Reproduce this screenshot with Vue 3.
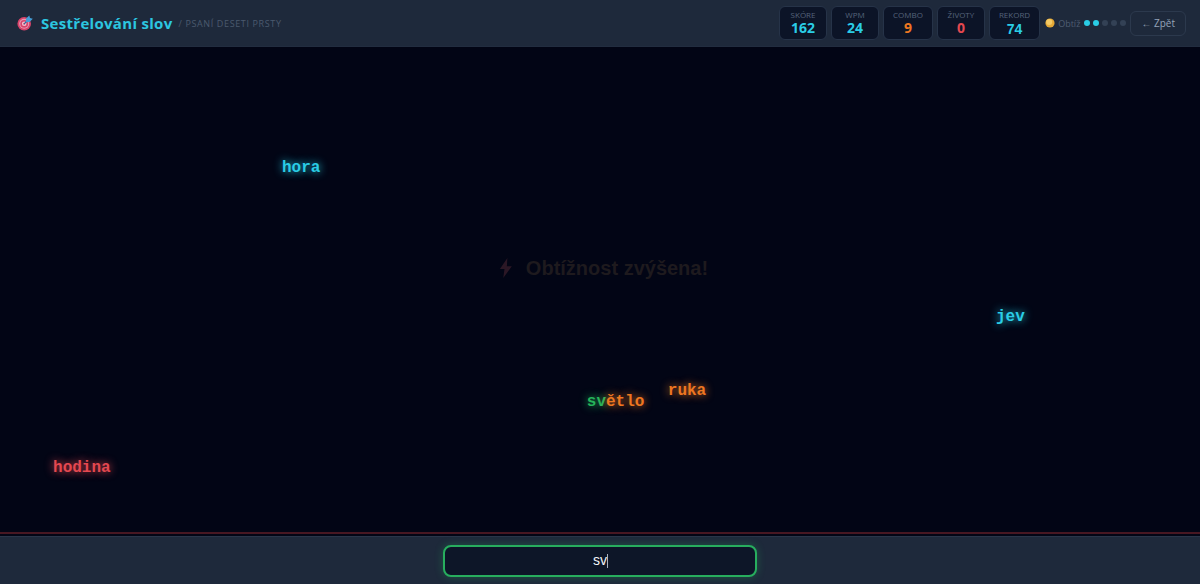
<script setup>
import { ref } from 'vue'

const typed = ref('sv')
const level = 2
const stats = [
  { label: 'Skóre', value: 162, tone: 'cyan' },
  { label: 'WPM', value: 24, tone: 'cyan' },
  { label: 'Combo', value: 9, tone: 'orange' },
  { label: 'Životy', value: 0, tone: 'red' },
  { label: 'Rekord', value: 74, tone: 'cyan', plain: true }
]
const words = [
  { done: '', rest: 'hora', x: 23.5, y: 24.8, tone: 'cyan' },
  { done: '', rest: 'jev', x: 83, y: 55.4, tone: 'cyan' },
  { done: '', rest: 'ruka', x: 55.65, y: 70.6, tone: 'orange' },
  { done: 'sv', rest: 'ětlo', x: 48.9, y: 72.8, tone: 'orange' },
  { done: '', rest: 'hodina', x: 4.42, y: 86.4, tone: 'red' }
]
</script>

<template>
  <div class="game">
    <header class="bar">
      <svg class="target" viewBox="0 0 16 16" aria-hidden="true">
        <circle cx="7.2" cy="8.8" r="6.8" fill="#d9436b" />
        <circle cx="7.2" cy="8.8" r="5" fill="#e59ab2" />
        <circle cx="7.2" cy="8.8" r="3.9" fill="#d9436b" />
        <circle cx="7.2" cy="8.8" r="2.3" fill="#efc3d2" />
        <circle cx="7.2" cy="8.8" r="1" fill="#d9436b" />
        <path d="M7.2 8.8 11 5" stroke="#276f9f" stroke-width="1.2" />
        <path d="M8.8 7.2 9.1 3.6 12.3 .4 13 3 15.8 3.7 12.6 6.9Z" fill="#459fd8" />
      </svg>
      <h1 class="title">Sestřelování slov</h1>
      <span class="subtitle">/ Psaní deseti prsty</span>
      <dl class="stats">
        <div v-for="s in stats" :key="s.label" class="stat">
          <dt>{{ s.label }}</dt>
          <dd :class="[s.tone, { plain: s.plain }]">{{ s.value }}</dd>
        </div>
      </dl>
      <div class="difficulty">
        <svg class="coin" viewBox="0 0 10 10" aria-hidden="true">
          <circle cx="5" cy="5" r="4.6" fill="#e5a936" />
          <circle cx="4.2" cy="4" r="3" fill="#f4ca65" />
        </svg>
        <span class="level-label">Obtíž</span>
        <span class="dots"><i v-for="n in 5" :key="n" :class="{ on: n <= level }"></i></span>
      </div>
      <button class="back" type="button">← Zpět</button>
    </header>

    <main class="field">
      <p class="notice">
        <svg class="bolt" viewBox="0 0 12 20" aria-hidden="true">
          <path d="M7.5 0 0 11h4.6L3.4 20 12 8.2H7Z" fill="#2b1725" />
        </svg>
        <span>Obtížnost zvýšena!</span>
      </p>
      <span
        v-for="w in words"
        :key="w.rest"
        class="word"
        :class="w.tone"
        :style="{ left: w.x + '%', top: w.y + '%' }"
      ><span v-if="w.done" class="done">{{ w.done }}</span>{{ w.rest }}</span>
    </main>

    <footer class="entry">
      <div class="entry-box">
        <input v-model="typed" type="text" aria-label="Napiš slovo" autocomplete="off" spellcheck="false" />
        <span class="caret-line" aria-hidden="true"><span class="ghost">{{ typed }}</span><i class="caret"></i></span>
      </div>
    </footer>
  </div>
</template>

<style>
body {
  margin: 0;
  background: #020617;
}
</style>

<style scoped>
.game {
  display: flex;
  flex-direction: column;
  height: 100vh;
  background: #020515;
  color: #94a3b8;
  font-family: "Open Sans", "Noto Sans", sans-serif;
}
.bar {
  display: flex;
  align-items: center;
  box-sizing: border-box;
  padding: 6px 14px 6px 17px;
  background: #1e293b;
  border-bottom: 1px solid #222d40;
}
.target {
  width: 16px;
  height: 16px;
  margin-right: 8px;
}
.title {
  margin: 0;
  color: #2cc6e0;
  font-size: 15px;
  font-weight: 700;
  line-height: 20px;
  letter-spacing: 0.02em;
  white-space: nowrap;
}
.subtitle {
  margin-left: 6px;
  color: #4b596e;
  font-size: 9px;
  letter-spacing: 0.07em;
  text-transform: uppercase;
  white-space: nowrap;
}
.stats {
  display: flex;
  gap: 4px;
  margin: 0 5px 0 auto;
}
.stat {
  box-sizing: border-box;
  height: 34px;
  min-width: 48px;
  padding: 3px 9px;
  background: #0c1427;
  border: 1px solid #263348;
  border-radius: 6px;
  text-align: center;
}
.stat dt {
  color: #55637a;
  font-size: 8px;
  line-height: 10px;
  text-transform: uppercase;
}
.stat dd {
  margin: 0;
  font-size: 14px;
  font-weight: 700;
  line-height: 16px;
}
.stat dd.plain {
  font-family: "Liberation Sans", sans-serif;
  line-height: 18px;
}
.cyan {
  color: #2acde6;
}
.orange {
  color: #ed7721;
}
.red {
  color: #e44850;
}
.difficulty {
  display: flex;
  align-items: center;
  margin-right: 4px;
}
.coin {
  width: 10px;
  height: 10px;
  margin-right: 3px;
}
.level-label {
  color: #4f5d72;
  font-size: 9px;
}
.dots {
  display: flex;
  gap: 3px;
  margin-left: 4px;
}
.dots i {
  width: 6px;
  height: 6px;
  border-radius: 50%;
  background: #334155;
}
.dots i.on {
  background: #2acde6;
}
.back {
  height: 25px;
  padding: 0 10px;
  background: transparent;
  border: 1px solid #2c394d;
  border-radius: 6px;
  color: #94a3b8;
  font-family: inherit;
  font-size: 10px;
  white-space: nowrap;
}
.field {
  position: relative;
  flex: 1;
  overflow: hidden;
  border-bottom: 2px solid #020515;
}
.field::after {
  content: "";
  position: absolute;
  inset: auto 0 0;
  height: 2px;
  background: #471722;
}
.notice {
  position: absolute;
  top: 45.4%;
  left: 50%;
  transform: translate(-50%, -50%);
  display: flex;
  align-items: center;
  gap: 14px;
  margin: 0;
  padding-left: 8px;
  color: #1e1a1e;
  font: 700 20px/24px "Liberation Sans", sans-serif;
  white-space: nowrap;
}
.bolt {
  width: 12px;
  height: 20px;
}
.word {
  position: absolute;
  transform: translateY(-50%);
  font: 700 16px/18px "Liberation Mono", monospace;
  text-shadow: 0 0 8px currentColor;
  white-space: nowrap;
}
.done {
  color: #25b45b;
}
.entry {
  display: flex;
  justify-content: center;
  padding: 8px 16px 7px;
  background: #1e293b;
  border-top: 1px solid #293549;
}
.entry-box {
  position: relative;
  width: 314px;
  max-width: 100%;
}
.entry-box input {
  display: block;
  box-sizing: border-box;
  width: 100%;
  height: 32px;
  padding: 0 12px 2px;
  background: #0d1628;
  border: 2px solid #27ae5e;
  border-radius: 8px;
  outline: none;
  box-shadow: 0 0 8px rgba(34, 197, 94, 0.3);
  color: #f1f5f9;
  font: 14px/20px "Liberation Sans", sans-serif;
  text-align: center;
  caret-color: transparent;
}
.caret-line {
  position: absolute;
  inset: 0;
  display: flex;
  align-items: center;
  justify-content: center;
  font: 14px/20px "Liberation Sans", sans-serif;
  pointer-events: none;
}
.ghost {
  visibility: hidden;
}
.caret {
  width: 1px;
  height: 14px;
  background: #a8b0bd;
}
</style>
